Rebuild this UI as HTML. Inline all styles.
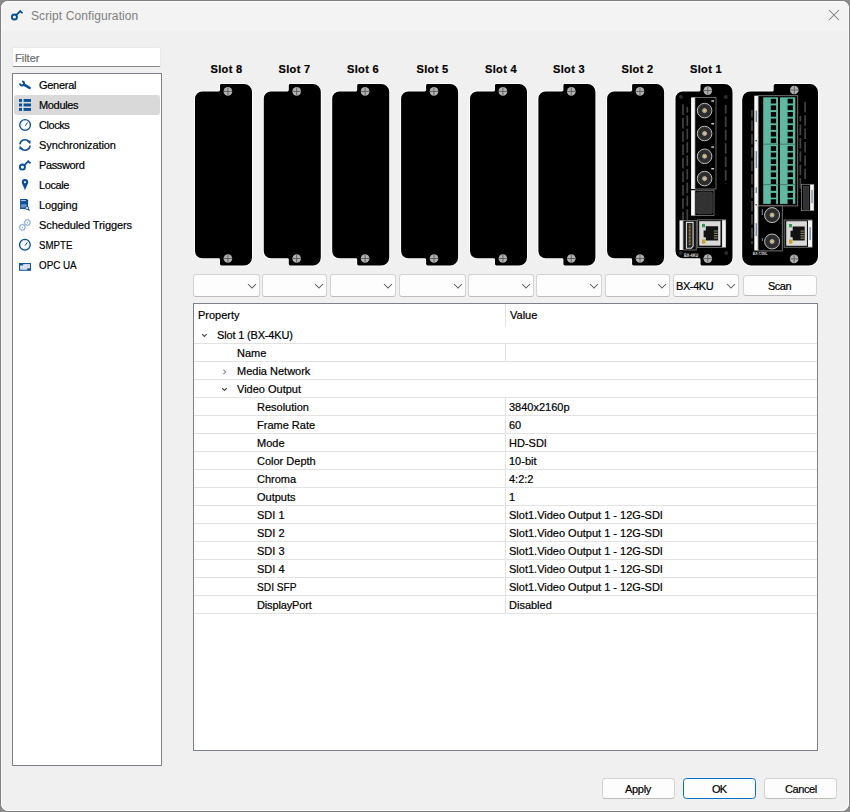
<!DOCTYPE html><html><head><meta charset="utf-8"><style>
html,body{margin:0;padding:0;width:850px;height:812px;overflow:hidden;background:#8a8a8a;}
*{box-sizing:border-box;}
body{font-family:"Liberation Sans",sans-serif;font-size:11px;color:#000;position:relative;}
.a{position:absolute;}
.win{left:0;top:0;width:850px;height:812px;border:1px solid #7f7f7f;border-radius:8px;background:#f0f0f0;overflow:hidden;}
.win .tb{position:absolute;left:0;top:0;right:0;height:30px;background:#f3f3f3;}
.win .hl{position:absolute;left:0;top:0;right:0;bottom:0;border:1px solid #fbfbfb;border-radius:7px;}
.t{position:absolute;white-space:nowrap;line-height:18px;height:18px;-webkit-text-stroke:0.2px currentColor;}
.tr{letter-spacing:-0.1px;}
.title{left:31px;top:7px;font-size:12px;color:#808080;-webkit-text-stroke:0;letter-spacing:0.1px;}
.filter{left:12px;top:47px;width:149px;height:20px;background:#fff;border:1px solid #e9e9e9;border-bottom:1px solid #868686;border-radius:2px;}
.tree{left:12px;top:73px;width:150px;height:693px;background:#fff;border:1px solid #7c8088;}
.sel{left:14px;top:95px;width:146px;height:20px;background:#d9d9d9;border-radius:3px;}
.lbl{font-weight:bold;text-align:center;letter-spacing:0.35px;}
.combo{top:274px;height:23px;background:#fdfdfd;border:1px solid #d3d3d3;border-bottom-color:#bdbdbd;border-radius:3px;}
.btn{position:absolute;background:#fdfdfd;border:1px solid #d3d3d3;border-bottom-color:#bdbdbd;border-radius:3.5px;}
.table{left:193px;top:303px;width:625px;height:448px;background:#fff;border:1px solid #7c8088;}
.hline{position:absolute;height:1px;background:#e3e3e3;}
.vline{position:absolute;width:1px;background:#e3e3e3;}
</style></head><body>
<div class="a win"><div class="tb"></div><div class="hl"></div></div>
<svg class="a" style="left:0;top:0" width="40" height="30" viewBox="0 0 40 30">
<circle cx="14.399999999999999" cy="17.0" r="2.55" fill="none" stroke="#0b4f98" stroke-width="1.9"/>
<path d="M16.2,15.200000000000017 L20.9,10.5 M20.2,11.300000000000011 L22.6,13.099999999999994" stroke="#0b4f98" stroke-width="1.8" fill="none"/>
</svg>
<div class="t title" style="left:31px;top:7px;">Script Configuration</div>
<svg class="a" style="left:828px;top:9px" width="12" height="12" viewBox="0 0 12 12">
<path d="M1 1 L11 11 M11 1 L1 11" stroke="#7a7a7a" stroke-width="1.05"/></svg>
<div class="a filter"></div>
<div class="t " style="left:15px;top:49px;color:#6e6e6e">Filter</div>
<div class="a tree"></div>
<div class="a sel"></div>
<div class="t " style="left:39px;top:76px;letter-spacing:-0.28px">General</div>
<div class="t " style="left:39px;top:96px;letter-spacing:-0.33px">Modules</div>
<div class="t " style="left:39px;top:116px;letter-spacing:-0.46px">Clocks</div>
<div class="t " style="left:39px;top:136px;letter-spacing:-0.1px">Synchronization</div>
<div class="t " style="left:39px;top:156px;letter-spacing:-0.36px">Password</div>
<div class="t " style="left:39px;top:176px;letter-spacing:-0.4px">Locale</div>
<div class="t " style="left:39px;top:196px;letter-spacing:-0.1px">Logging</div>
<div class="t " style="left:39px;top:216px;letter-spacing:-0.1px">Scheduled Triggers</div>
<div class="t " style="left:39px;top:236px;transform:scaleX(0.88);transform-origin:0 0">SMPTE</div>
<div class="t " style="left:39px;top:256px;transform:scaleX(0.893);transform-origin:0 0">OPC UA</div>
<svg class="a" style="left:0;top:0" width="40" height="280" viewBox="0 0 40 280"><path d="M19.95,83.55 A2.05,2.05 0 1 0 22.1,81.35" fill="none" stroke="#0b4f98" stroke-width="1.95"/><path d="M23.9,84.7 L29.6,87.9" stroke="#0b4f98" stroke-width="2.5" stroke-linecap="round"/><g fill="#0b4f98"><rect x="19" y="99" width="3" height="2.9"/><rect x="19" y="103.5" width="3" height="2.9"/><rect x="19" y="108" width="3" height="2.9"/><rect x="23.6" y="99" width="7.4" height="2.9"/><rect x="23.6" y="103.5" width="7.4" height="2.9"/><rect x="23.6" y="108" width="7.4" height="2.9"/></g><circle cx="25.1" cy="125" r="5.35" fill="none" stroke="#0b4f98" stroke-width="1.3"/><path d="M25.3,125.8 L27.5,122.5" stroke="#0b4f98" stroke-width="0.95"/><path d="M25.1,120.4 V121.2 M25.1,128.8 V129.6 M20.5,125 H21.3 M28.900000000000002,125 H29.700000000000003" stroke="#0b4f98" stroke-width="0.7" opacity="0.5"/><path d="M19.9,144.4 A5.15,5.15 0 0 1 28.9,141.6" fill="none" stroke="#0b4f98" stroke-width="1.6"/><path d="M27.0,141.2 L30.8,140.4 L30.2,144.2 Z" fill="#0b4f98"/><path d="M30.1,145.6 A5.15,5.15 0 0 1 21.1,148.4" fill="none" stroke="#0b4f98" stroke-width="1.6"/><path d="M23.0,148.8 L19.2,149.6 L19.8,145.8 Z" fill="#0b4f98"/><circle cx="22.4" cy="167.1" r="2.55" fill="none" stroke="#0b4f98" stroke-width="1.9"/><path d="M24.2,165.3 L28.9,160.6 M28.2,161.4 L30.6,163.2" stroke="#0b4f98" stroke-width="1.8" fill="none"/><path d="M25,179 A3.2,3.2 0 0 1 28.2,182.2 C28.2,184 26.2,186 25,190.6 C23.8,186 21.8,184 21.8,182.2 A3.2,3.2 0 0 1 25,179 Z" fill="#0b4f98"/><rect x="24.1" y="181.3" width="1.8" height="1.8" fill="#fff"/><path d="M20.1,199.1 H27 L28.1,200.2 V208.9 H20.1 Z" fill="#0b4f98"/><rect x="21.1" y="200.1" width="4.7" height="1" fill="#c4d3e6"/><rect x="21.1" y="204.2" width="5.6" height="3.4" fill="#6b93c3"/><circle cx="27" cy="208" r="1.5" fill="#fff" stroke="#0b4f98" stroke-width="0.9"/><path d="M28,209 L29.6,210.6" stroke="#0b4f98" stroke-width="1.1"/><circle cx="22.4" cy="227.4" r="2.75" fill="none" stroke="#6a94c4" stroke-width="0.95"/><circle cx="22.4" cy="227.4" r="3.45" fill="none" stroke="#6a94c4" stroke-width="0.8" stroke-dasharray="1.2 1.5" opacity="0.5"/><circle cx="22.4" cy="227.4" r="0.65" fill="#6a94c4"/><circle cx="27.4" cy="222.5" r="2.75" fill="none" stroke="#6a94c4" stroke-width="0.95"/><circle cx="27.4" cy="222.5" r="3.45" fill="none" stroke="#6a94c4" stroke-width="0.8" stroke-dasharray="1.2 1.5" opacity="0.5"/><circle cx="27.4" cy="222.5" r="0.65" fill="#6a94c4"/><circle cx="24.9" cy="244.8" r="5.35" fill="none" stroke="#0b4f98" stroke-width="1.3"/><path d="M25.099999999999998,245.60000000000002 L27.299999999999997,242.3" stroke="#0b4f98" stroke-width="0.95"/><path d="M24.9,240.20000000000002 V241.0 M24.9,248.60000000000002 V249.4 M20.299999999999997,244.8 H21.099999999999998 M28.7,244.8 H29.5" stroke="#0b4f98" stroke-width="0.7" opacity="0.5"/><rect x="19.6" y="263.6" width="10.8" height="6.6" fill="#f2f6fb" stroke="#0b4f98" stroke-width="1.1"/><path d="M22.5,264 V270 M25,264 V270 M27.5,264 V270 M20,266 H30 M20,268.2 H30" stroke="#b4c8e0" stroke-width="0.55"/><rect x="19.6" y="263.6" width="3.6" height="1.8" fill="#0b4f98"/><rect x="27.2" y="268.4" width="3.2" height="1.8" fill="#0b4f98"/></svg>
<div class="t lbl" style="left:193px;top:60px;width:67px">Slot 8</div>
<div class="a combo" style="left:193px;width:67px"></div>
<svg class="a" style="left:247px;top:283px" width="10" height="6" viewBox="0 0 10 6"><path d="M1 1 L5 5 L9 1" stroke="#5a5a5a" stroke-width="1.05" fill="none"/></svg>
<div class="t lbl" style="left:262px;top:60px;width:65px">Slot 7</div>
<div class="a combo" style="left:262px;width:65px"></div>
<svg class="a" style="left:314px;top:283px" width="10" height="6" viewBox="0 0 10 6"><path d="M1 1 L5 5 L9 1" stroke="#5a5a5a" stroke-width="1.05" fill="none"/></svg>
<div class="t lbl" style="left:330px;top:60px;width:66px">Slot 6</div>
<div class="a combo" style="left:330px;width:66px"></div>
<svg class="a" style="left:383px;top:283px" width="10" height="6" viewBox="0 0 10 6"><path d="M1 1 L5 5 L9 1" stroke="#5a5a5a" stroke-width="1.05" fill="none"/></svg>
<div class="t lbl" style="left:399px;top:60px;width:67px">Slot 5</div>
<div class="a combo" style="left:399px;width:67px"></div>
<svg class="a" style="left:453px;top:283px" width="10" height="6" viewBox="0 0 10 6"><path d="M1 1 L5 5 L9 1" stroke="#5a5a5a" stroke-width="1.05" fill="none"/></svg>
<div class="t lbl" style="left:468px;top:60px;width:66px">Slot 4</div>
<div class="a combo" style="left:468px;width:66px"></div>
<svg class="a" style="left:521px;top:283px" width="10" height="6" viewBox="0 0 10 6"><path d="M1 1 L5 5 L9 1" stroke="#5a5a5a" stroke-width="1.05" fill="none"/></svg>
<div class="t lbl" style="left:536px;top:60px;width:66px">Slot 3</div>
<div class="a combo" style="left:536px;width:66px"></div>
<svg class="a" style="left:589px;top:283px" width="10" height="6" viewBox="0 0 10 6"><path d="M1 1 L5 5 L9 1" stroke="#5a5a5a" stroke-width="1.05" fill="none"/></svg>
<div class="t lbl" style="left:605px;top:60px;width:65px">Slot 2</div>
<div class="a combo" style="left:605px;width:65px"></div>
<svg class="a" style="left:657px;top:283px" width="10" height="6" viewBox="0 0 10 6"><path d="M1 1 L5 5 L9 1" stroke="#5a5a5a" stroke-width="1.05" fill="none"/></svg>
<div class="t lbl" style="left:673px;top:60px;width:66px">Slot 1</div>
<div class="a combo" style="left:673px;width:66px"></div>
<svg class="a" style="left:726px;top:283px" width="10" height="6" viewBox="0 0 10 6"><path d="M1 1 L5 5 L9 1" stroke="#5a5a5a" stroke-width="1.05" fill="none"/></svg>
<div class="t " style="left:676px;top:277px;letter-spacing:-0.4px">BX-4KU</div>
<div class="btn" style="left:743px;top:275px;width:74px;height:21px"></div>
<div class="t " style="left:768px;top:277px;letter-spacing:-0.5px">Scan</div>
<svg class="a" style="left:0;top:0" width="850" height="280" viewBox="0 0 850 280"><g transform="translate(195,84)"><path d="M0,14.6 A7.2,7.2 0 0 1 7.2,7.4 H23.6 Q25,7.4 25,6 V1.4 Q25,0 26.4,0 H49 A8,8 0 0 1 57,8 V173.5 A8,8 0 0 1 49,181.5 H26.4 Q25,181.5 25,180.1 V175.7 Q25,174.3 23.6,174.3 H7.2 A7.2,7.2 0 0 1 0,167.1 Z" fill="none" stroke="#fcfcfc" stroke-width="2"/><path d="M0,14.6 A7.2,7.2 0 0 1 7.2,7.4 H23.6 Q25,7.4 25,6 V1.4 Q25,0 26.4,0 H49 A8,8 0 0 1 57,8 V173.5 A8,8 0 0 1 49,181.5 H26.4 Q25,181.5 25,180.1 V175.7 Q25,174.3 23.6,174.3 H7.2 A7.2,7.2 0 0 1 0,167.1 Z" fill="#000"/><circle cx="32.9" cy="7.4" r="4.3" fill="#b2b2b2"/><path d="M28.9,7.4 H36.9 M32.9,3.4000000000000004 V11.399999999999999" stroke="#4a4a4a" stroke-width="0.75"/><circle cx="32.9" cy="174.5" r="4.3" fill="#b2b2b2"/><path d="M28.9,174.5 H36.9 M32.9,170.5 V178.5" stroke="#4a4a4a" stroke-width="0.75"/></g><g transform="translate(263.8,84)"><path d="M0,14.6 A7.2,7.2 0 0 1 7.2,7.4 H23.6 Q25,7.4 25,6 V1.4 Q25,0 26.4,0 H49 A8,8 0 0 1 57,8 V173.5 A8,8 0 0 1 49,181.5 H26.4 Q25,181.5 25,180.1 V175.7 Q25,174.3 23.6,174.3 H7.2 A7.2,7.2 0 0 1 0,167.1 Z" fill="none" stroke="#fcfcfc" stroke-width="2"/><path d="M0,14.6 A7.2,7.2 0 0 1 7.2,7.4 H23.6 Q25,7.4 25,6 V1.4 Q25,0 26.4,0 H49 A8,8 0 0 1 57,8 V173.5 A8,8 0 0 1 49,181.5 H26.4 Q25,181.5 25,180.1 V175.7 Q25,174.3 23.6,174.3 H7.2 A7.2,7.2 0 0 1 0,167.1 Z" fill="#000"/><circle cx="32.9" cy="7.4" r="4.3" fill="#b2b2b2"/><path d="M28.9,7.4 H36.9 M32.9,3.4000000000000004 V11.399999999999999" stroke="#4a4a4a" stroke-width="0.75"/><circle cx="32.9" cy="174.5" r="4.3" fill="#b2b2b2"/><path d="M28.9,174.5 H36.9 M32.9,170.5 V178.5" stroke="#4a4a4a" stroke-width="0.75"/></g><g transform="translate(332.2,84)"><path d="M0,14.6 A7.2,7.2 0 0 1 7.2,7.4 H23.6 Q25,7.4 25,6 V1.4 Q25,0 26.4,0 H49 A8,8 0 0 1 57,8 V173.5 A8,8 0 0 1 49,181.5 H26.4 Q25,181.5 25,180.1 V175.7 Q25,174.3 23.6,174.3 H7.2 A7.2,7.2 0 0 1 0,167.1 Z" fill="none" stroke="#fcfcfc" stroke-width="2"/><path d="M0,14.6 A7.2,7.2 0 0 1 7.2,7.4 H23.6 Q25,7.4 25,6 V1.4 Q25,0 26.4,0 H49 A8,8 0 0 1 57,8 V173.5 A8,8 0 0 1 49,181.5 H26.4 Q25,181.5 25,180.1 V175.7 Q25,174.3 23.6,174.3 H7.2 A7.2,7.2 0 0 1 0,167.1 Z" fill="#000"/><circle cx="32.9" cy="7.4" r="4.3" fill="#b2b2b2"/><path d="M28.9,7.4 H36.9 M32.9,3.4000000000000004 V11.399999999999999" stroke="#4a4a4a" stroke-width="0.75"/><circle cx="32.9" cy="174.5" r="4.3" fill="#b2b2b2"/><path d="M28.9,174.5 H36.9 M32.9,170.5 V178.5" stroke="#4a4a4a" stroke-width="0.75"/></g><g transform="translate(401.1,84)"><path d="M0,14.6 A7.2,7.2 0 0 1 7.2,7.4 H23.6 Q25,7.4 25,6 V1.4 Q25,0 26.4,0 H49 A8,8 0 0 1 57,8 V173.5 A8,8 0 0 1 49,181.5 H26.4 Q25,181.5 25,180.1 V175.7 Q25,174.3 23.6,174.3 H7.2 A7.2,7.2 0 0 1 0,167.1 Z" fill="none" stroke="#fcfcfc" stroke-width="2"/><path d="M0,14.6 A7.2,7.2 0 0 1 7.2,7.4 H23.6 Q25,7.4 25,6 V1.4 Q25,0 26.4,0 H49 A8,8 0 0 1 57,8 V173.5 A8,8 0 0 1 49,181.5 H26.4 Q25,181.5 25,180.1 V175.7 Q25,174.3 23.6,174.3 H7.2 A7.2,7.2 0 0 1 0,167.1 Z" fill="#000"/><circle cx="32.9" cy="7.4" r="4.3" fill="#b2b2b2"/><path d="M28.9,7.4 H36.9 M32.9,3.4000000000000004 V11.399999999999999" stroke="#4a4a4a" stroke-width="0.75"/><circle cx="32.9" cy="174.5" r="4.3" fill="#b2b2b2"/><path d="M28.9,174.5 H36.9 M32.9,170.5 V178.5" stroke="#4a4a4a" stroke-width="0.75"/></g><g transform="translate(470,84)"><path d="M0,14.6 A7.2,7.2 0 0 1 7.2,7.4 H23.6 Q25,7.4 25,6 V1.4 Q25,0 26.4,0 H49 A8,8 0 0 1 57,8 V173.5 A8,8 0 0 1 49,181.5 H26.4 Q25,181.5 25,180.1 V175.7 Q25,174.3 23.6,174.3 H7.2 A7.2,7.2 0 0 1 0,167.1 Z" fill="none" stroke="#fcfcfc" stroke-width="2"/><path d="M0,14.6 A7.2,7.2 0 0 1 7.2,7.4 H23.6 Q25,7.4 25,6 V1.4 Q25,0 26.4,0 H49 A8,8 0 0 1 57,8 V173.5 A8,8 0 0 1 49,181.5 H26.4 Q25,181.5 25,180.1 V175.7 Q25,174.3 23.6,174.3 H7.2 A7.2,7.2 0 0 1 0,167.1 Z" fill="#000"/><circle cx="32.9" cy="7.4" r="4.3" fill="#b2b2b2"/><path d="M28.9,7.4 H36.9 M32.9,3.4000000000000004 V11.399999999999999" stroke="#4a4a4a" stroke-width="0.75"/><circle cx="32.9" cy="174.5" r="4.3" fill="#b2b2b2"/><path d="M28.9,174.5 H36.9 M32.9,170.5 V178.5" stroke="#4a4a4a" stroke-width="0.75"/></g><g transform="translate(538.4,84)"><path d="M0,14.6 A7.2,7.2 0 0 1 7.2,7.4 H23.6 Q25,7.4 25,6 V1.4 Q25,0 26.4,0 H49 A8,8 0 0 1 57,8 V173.5 A8,8 0 0 1 49,181.5 H26.4 Q25,181.5 25,180.1 V175.7 Q25,174.3 23.6,174.3 H7.2 A7.2,7.2 0 0 1 0,167.1 Z" fill="none" stroke="#fcfcfc" stroke-width="2"/><path d="M0,14.6 A7.2,7.2 0 0 1 7.2,7.4 H23.6 Q25,7.4 25,6 V1.4 Q25,0 26.4,0 H49 A8,8 0 0 1 57,8 V173.5 A8,8 0 0 1 49,181.5 H26.4 Q25,181.5 25,180.1 V175.7 Q25,174.3 23.6,174.3 H7.2 A7.2,7.2 0 0 1 0,167.1 Z" fill="#000"/><circle cx="32.9" cy="7.4" r="4.3" fill="#b2b2b2"/><path d="M28.9,7.4 H36.9 M32.9,3.4000000000000004 V11.399999999999999" stroke="#4a4a4a" stroke-width="0.75"/><circle cx="32.9" cy="174.5" r="4.3" fill="#b2b2b2"/><path d="M28.9,174.5 H36.9 M32.9,170.5 V178.5" stroke="#4a4a4a" stroke-width="0.75"/></g><g transform="translate(607.1,84)"><path d="M0,14.6 A7.2,7.2 0 0 1 7.2,7.4 H23.6 Q25,7.4 25,6 V1.4 Q25,0 26.4,0 H49 A8,8 0 0 1 57,8 V173.5 A8,8 0 0 1 49,181.5 H26.4 Q25,181.5 25,180.1 V175.7 Q25,174.3 23.6,174.3 H7.2 A7.2,7.2 0 0 1 0,167.1 Z" fill="none" stroke="#fcfcfc" stroke-width="2"/><path d="M0,14.6 A7.2,7.2 0 0 1 7.2,7.4 H23.6 Q25,7.4 25,6 V1.4 Q25,0 26.4,0 H49 A8,8 0 0 1 57,8 V173.5 A8,8 0 0 1 49,181.5 H26.4 Q25,181.5 25,180.1 V175.7 Q25,174.3 23.6,174.3 H7.2 A7.2,7.2 0 0 1 0,167.1 Z" fill="#000"/><circle cx="32.9" cy="7.4" r="4.3" fill="#b2b2b2"/><path d="M28.9,7.4 H36.9 M32.9,3.4000000000000004 V11.399999999999999" stroke="#4a4a4a" stroke-width="0.75"/><circle cx="32.9" cy="174.5" r="4.3" fill="#b2b2b2"/><path d="M28.9,174.5 H36.9 M32.9,170.5 V178.5" stroke="#4a4a4a" stroke-width="0.75"/></g><g transform="translate(675.5,84)"><path d="M0,14.6 A7.2,7.2 0 0 1 7.2,7.4 H23.6 Q25,7.4 25,6 V1.4 Q25,0 26.4,0 H49 A8,8 0 0 1 57,8 V173.5 A8,8 0 0 1 49,181.5 H26.4 Q25,181.5 25,180.1 V175.7 Q25,174.3 23.6,174.3 H7.2 A7.2,7.2 0 0 1 0,167.1 Z" fill="none" stroke="#fcfcfc" stroke-width="2"/><path d="M0,14.6 A7.2,7.2 0 0 1 7.2,7.4 H23.6 Q25,7.4 25,6 V1.4 Q25,0 26.4,0 H49 A8,8 0 0 1 57,8 V173.5 A8,8 0 0 1 49,181.5 H26.4 Q25,181.5 25,180.1 V175.7 Q25,174.3 23.6,174.3 H7.2 A7.2,7.2 0 0 1 0,167.1 Z" fill="#000"/><circle cx="5.5" cy="13" r="1.9" fill="#2c2c2c"/><circle cx="50.3" cy="13" r="1.9" fill="#2c2c2c"/><circle cx="5.3" cy="169" r="1.9" fill="#2c2c2c"/><circle cx="50.7" cy="169" r="1.9" fill="#2c2c2c"/><path d="M7.5,20.5 V158" stroke="#424242" stroke-width="1.7" stroke-dasharray="10.5 2.9000000000000004" stroke-dashoffset="0"/><path d="M11.8,23 V150" stroke="#424242" stroke-width="1.7" stroke-dasharray="10.5 2.9000000000000004" stroke-dashoffset="5"/><path d="M50.2,21 V100" stroke="#424242" stroke-width="1.7" stroke-dasharray="10.5 2.9000000000000004" stroke-dashoffset="2"/><rect x="15.6" y="13.4" width="3.9" height="91.6" fill="#fafafa"/><rect x="19.5" y="13.4" width="21" height="91.6" fill="#000" stroke="#8e8e8e" stroke-width="0.7"/><circle cx="29.1" cy="26.6" r="7.3" fill="#333" stroke="#c2c2c2" stroke-width="0.95"/><circle cx="29.1" cy="26.6" r="5.1" fill="#2e2e2e" stroke="#262626" stroke-width="0.6"/><circle cx="29.1" cy="26.6" r="2.0" fill="#b49a6a" stroke="#c4c4c4" stroke-width="0.8"/><circle cx="29.1" cy="26.6" r="0.9" fill="#f2d49a"/><circle cx="29.1" cy="49.5" r="7.3" fill="#333" stroke="#c2c2c2" stroke-width="0.95"/><circle cx="29.1" cy="49.5" r="5.1" fill="#2e2e2e" stroke="#262626" stroke-width="0.6"/><circle cx="29.1" cy="49.5" r="2.0" fill="#b49a6a" stroke="#c4c4c4" stroke-width="0.8"/><circle cx="29.1" cy="49.5" r="0.9" fill="#f2d49a"/><circle cx="29.1" cy="72.3" r="7.3" fill="#333" stroke="#c2c2c2" stroke-width="0.95"/><circle cx="29.1" cy="72.3" r="5.1" fill="#2e2e2e" stroke="#262626" stroke-width="0.6"/><circle cx="29.1" cy="72.3" r="2.0" fill="#b49a6a" stroke="#c4c4c4" stroke-width="0.8"/><circle cx="29.1" cy="72.3" r="0.9" fill="#f2d49a"/><circle cx="29.1" cy="94.6" r="7.3" fill="#333" stroke="#c2c2c2" stroke-width="0.95"/><circle cx="29.1" cy="94.6" r="5.1" fill="#2e2e2e" stroke="#262626" stroke-width="0.6"/><circle cx="29.1" cy="94.6" r="2.0" fill="#b49a6a" stroke="#c4c4c4" stroke-width="0.8"/><circle cx="29.1" cy="94.6" r="0.9" fill="#f2d49a"/><rect x="35.8" y="16.299999999999997" width="2.8" height="1.3" fill="#e6e6e6"/><rect x="35.8" y="39.1" width="2.8" height="1.3" fill="#e6e6e6"/><rect x="35.8" y="62.4" width="2.8" height="1.3" fill="#e6e6e6"/><rect x="35.8" y="84.10000000000001" width="2.8" height="1.3" fill="#e6e6e6"/><rect x="15.6" y="106.2" width="3.9" height="25.4" fill="#fafafa"/><rect x="19.5" y="106.2" width="19" height="25.4" fill="#000" stroke="#8e8e8e" stroke-width="0.7"/><rect x="20.9" y="107.9" width="15.9" height="21.9" rx="1.4" fill="#323232" stroke="#4a4a4a" stroke-width="0.5"/><rect x="4" y="136.4" width="3.7" height="29.6" fill="#f2f2f2"/><rect x="7.7" y="136.4" width="13.1" height="29.6" fill="#111" stroke="#7a7a7a" stroke-width="0.8"/><path d="M10.9,138.4 H17.6 V162 L15.8,164.2 H10.9 Z" fill="#262626" stroke="#d8d8d8" stroke-width="1.1"/><path d="M14.2,140.5 V161" stroke="#a48a4e" stroke-width="1.8" stroke-dasharray="0.9 0.5"/><rect x="21.8" y="135.8" width="28.400000000000002" height="27.69999999999999" fill="#111" stroke="#7a7a7a" stroke-width="0.8"/><rect x="24.2" y="137.6" width="20.400000000000002" height="23.599999999999994" fill="#dadada" stroke="#efefef" stroke-width="0.6"/><path d="M30.32,142.32 H42.6 V156.48 H30.32 V153.176 H28.12 V146.56799999999998 H30.32 Z" fill="#121212"/><rect x="38.4" y="146.332" width="3.8" height="1.3" fill="#7d7b5a"/><rect x="38.4" y="148.69199999999998" width="3.8" height="1.3" fill="#7d7b5a"/><rect x="38.4" y="151.052" width="3.8" height="1.3" fill="#7d7b5a"/><rect x="38.4" y="153.41199999999998" width="3.8" height="1.3" fill="#7d7b5a"/><rect x="26.5" y="139.9" width="3" height="3.4" fill="#2f9b4c"/><rect x="26.5" y="155.39999999999998" width="3.4" height="4.2" fill="#c9a227"/><rect x="46.6" y="136.20000000000002" width="3.6000000000000014" height="26.899999999999988" fill="#f2f2f2"/><text x="8.6" y="172.6" font-family="Liberation Sans" font-weight="bold" font-size="5.2" fill="#eeeeee" text-rendering="geometricPrecision" textLength="14" lengthAdjust="spacingAndGlyphs">BX-4KU</text><circle cx="32.3" cy="6.6" r="4.3" fill="#b2b2b2"/><path d="M28.299999999999997,6.6 H36.3 M32.3,2.5999999999999996 V10.599999999999998" stroke="#4a4a4a" stroke-width="0.75"/><circle cx="32.3" cy="174.6" r="4.3" fill="#b2b2b2"/><path d="M28.299999999999997,174.6 H36.3 M32.3,170.6 V178.6" stroke="#4a4a4a" stroke-width="0.75"/></g><g transform="translate(742.2,84.1)"><path d="M0,15.4 A8,8 0 0 1 8,7.4 H30 Q31.5,7.4 31.5,5.9 V1.5 Q31.5,0 33,0 H68 A7.8,7.8 0 0 1 75.8,7.8 V172.5 A8.8,8.8 0 0 1 67,181.3 H8.8 A8.8,8.8 0 0 1 0,172.5 Z" fill="none" stroke="#fcfcfc" stroke-width="2"/><path d="M0,15.4 A8,8 0 0 1 8,7.4 H30 Q31.5,7.4 31.5,5.9 V1.5 Q31.5,0 33,0 H68 A7.8,7.8 0 0 1 75.8,7.8 V172.5 A8.8,8.8 0 0 1 67,181.3 H8.8 A8.8,8.8 0 0 1 0,172.5 Z" fill="#000"/><path d="M9.8,26 V160" stroke="#424242" stroke-width="1.7" stroke-dasharray="10.5 2.9000000000000004" stroke-dashoffset="3"/><path d="M58.2,32 V108" stroke="#424242" stroke-width="1.7" stroke-dasharray="10.5 2.9000000000000004" stroke-dashoffset="5"/><path d="M62.9,17.7 V95" stroke="#424242" stroke-width="1.7" stroke-dasharray="10.5 2.9000000000000004" stroke-dashoffset="0"/><rect x="12.1" y="11.6" width="4" height="154.8" fill="#fafafa"/><rect x="16.1" y="11.6" width="39.4" height="110.2" fill="#000" stroke="#7e7e7e" stroke-width="0.9"/><rect x="21" y="13.2" width="14.8" height="106.6" fill="#5db9a2"/><rect x="37.8" y="13.2" width="15.3" height="106.6" fill="#5db9a2"/><path d="M21,60.1 H53.1 M21,100.5 H53.1" stroke="#2a5a4d" stroke-width="0.6"/><rect x="28.6" y="14.7" width="5.3" height="4.7" fill="#000"/><rect x="45.4" y="14.7" width="5.3" height="4.7" fill="#000"/><rect x="28.6" y="21.3" width="5.3" height="4.7" fill="#000"/><rect x="45.4" y="21.3" width="5.3" height="4.7" fill="#000"/><rect x="28.6" y="27.9" width="5.3" height="4.7" fill="#000"/><rect x="45.4" y="27.9" width="5.3" height="4.7" fill="#000"/><rect x="28.6" y="34.5" width="5.3" height="4.7" fill="#000"/><rect x="45.4" y="34.5" width="5.3" height="4.7" fill="#000"/><rect x="28.6" y="41.1" width="5.3" height="4.7" fill="#000"/><rect x="45.4" y="41.1" width="5.3" height="4.7" fill="#000"/><rect x="28.6" y="47.7" width="5.3" height="4.7" fill="#000"/><rect x="45.4" y="47.7" width="5.3" height="4.7" fill="#000"/><rect x="28.6" y="54.3" width="5.3" height="4.7" fill="#000"/><rect x="45.4" y="54.3" width="5.3" height="4.7" fill="#000"/><rect x="28.6" y="62.1" width="5.3" height="4.7" fill="#000"/><rect x="45.4" y="62.1" width="5.3" height="4.7" fill="#000"/><rect x="28.6" y="68.5" width="5.3" height="4.7" fill="#000"/><rect x="45.4" y="68.5" width="5.3" height="4.7" fill="#000"/><rect x="28.6" y="75.2" width="5.3" height="4.7" fill="#000"/><rect x="45.4" y="75.2" width="5.3" height="4.7" fill="#000"/><rect x="28.6" y="81.6" width="5.3" height="4.7" fill="#000"/><rect x="45.4" y="81.6" width="5.3" height="4.7" fill="#000"/><rect x="28.6" y="88.3" width="5.3" height="4.7" fill="#000"/><rect x="45.4" y="88.3" width="5.3" height="4.7" fill="#000"/><rect x="28.6" y="95.2" width="5.3" height="4.7" fill="#000"/><rect x="45.4" y="95.2" width="5.3" height="4.7" fill="#000"/><rect x="28.6" y="102" width="5.3" height="4.7" fill="#000"/><rect x="45.4" y="102" width="5.3" height="4.7" fill="#000"/><rect x="28.6" y="108.8" width="5.3" height="4.7" fill="#000"/><rect x="45.4" y="108.8" width="5.3" height="4.7" fill="#000"/><rect x="28.6" y="115.2" width="5.3" height="4.7" fill="#000"/><rect x="45.4" y="115.2" width="5.3" height="4.7" fill="#000"/><rect x="13.4" y="26.5" width="1.3" height="11.5" fill="#55688a" opacity="0.85"/><rect x="13.4" y="67" width="1.3" height="17" fill="#55688a" opacity="0.85"/><rect x="13.4" y="103" width="1.3" height="6" fill="#55688a" opacity="0.85"/><rect x="13.4" y="139" width="1.3" height="13" fill="#55688a" opacity="0.85"/><rect x="13.3" y="56" width="1.3" height="1.3" fill="#222"/><rect x="13.3" y="120" width="1.3" height="1.3" fill="#222"/><rect x="59.2" y="100.2" width="12.4" height="26.4" fill="#000" stroke="#8e8e8e" stroke-width="0.7"/><rect x="61.1" y="102" width="5.6" height="23.4" fill="#323232" stroke="#555" stroke-width="0.4"/><rect x="67.9" y="100.6" width="3.7" height="25.6" fill="#f2f2f2"/><rect x="69.3" y="106" width="1" height="13" fill="#55688a"/><rect x="15.9" y="121.8" width="24.2" height="45" fill="#000" stroke="#7e7e7e" stroke-width="0.9"/><circle cx="29.9" cy="131" r="7.5" fill="#333" stroke="#c2c2c2" stroke-width="0.95"/><circle cx="29.9" cy="131" r="5.3" fill="#2e2e2e" stroke="#262626" stroke-width="0.6"/><circle cx="29.9" cy="131" r="2.0" fill="#b49a6a" stroke="#c4c4c4" stroke-width="0.8"/><circle cx="29.9" cy="131" r="0.9" fill="#f2d49a"/><circle cx="29.9" cy="157.4" r="7.5" fill="#333" stroke="#c2c2c2" stroke-width="0.95"/><circle cx="29.9" cy="157.4" r="5.3" fill="#2e2e2e" stroke="#262626" stroke-width="0.6"/><circle cx="29.9" cy="157.4" r="2.0" fill="#b49a6a" stroke="#c4c4c4" stroke-width="0.8"/><circle cx="29.9" cy="157.4" r="0.9" fill="#f2d49a"/><rect x="19.6" y="125" width="1" height="6" fill="#6f8fb6"/><rect x="19.6" y="154" width="1" height="3" fill="#6f8fb6"/><rect x="42" y="135.9" width="27.900000000000006" height="27.299999999999983" fill="#111" stroke="#7a7a7a" stroke-width="0.8"/><rect x="44.5" y="137.6" width="20.0" height="23.599999999999994" fill="#dadada" stroke="#efefef" stroke-width="0.6"/><path d="M50.5,142.32 H62.5 V156.48 H50.5 V153.176 H48.3 V146.56799999999998 H50.5 Z" fill="#121212"/><rect x="58.3" y="146.332" width="3.8" height="1.3" fill="#7d7b5a"/><rect x="58.3" y="148.69199999999998" width="3.8" height="1.3" fill="#7d7b5a"/><rect x="58.3" y="151.052" width="3.8" height="1.3" fill="#7d7b5a"/><rect x="58.3" y="153.41199999999998" width="3.8" height="1.3" fill="#7d7b5a"/><rect x="46.8" y="139.9" width="3" height="3.4" fill="#2f9b4c"/><rect x="46.8" y="155.39999999999998" width="3.4" height="4.2" fill="#c9a227"/><rect x="65.8" y="136.3" width="4.1000000000000085" height="26.499999999999982" fill="#f2f2f2"/><rect x="67.4" y="143" width="1" height="13" fill="#3f5f8c"/><text x="10.6" y="171" font-family="Liberation Sans" font-weight="bold" font-size="4.8" fill="#d0d4de" text-rendering="geometricPrecision" textLength="14.8" lengthAdjust="spacingAndGlyphs">BX-C0NL</text><circle cx="52.1" cy="5.9" r="4.3" fill="#b2b2b2"/><path d="M48.1,5.9 H56.1 M52.1,1.9000000000000006 V9.899999999999999" stroke="#4a4a4a" stroke-width="0.75"/><circle cx="51.9" cy="174.8" r="4.3" fill="#b2b2b2"/><path d="M47.9,174.8 H55.9 M51.9,170.8 V178.8" stroke="#4a4a4a" stroke-width="0.75"/></g></svg>
<div class="a table"></div>
<div class="t " style="left:198px;top:306px;">Property</div>
<div class="t " style="left:510px;top:306px;">Value</div>
<div class="vline" style="left:505px;top:304px;height:22px"></div>
<div class="hline" style="left:194px;top:343px;width:623px"></div>
<div class="t " style="left:217px;top:326px;letter-spacing:-0.17px">Slot 1 (BX-4KU)</div>
<svg class="a" style="left:0;top:0" width="240" height="345" viewBox="0 0 240 345"><path d="M202.10000000000002,334.1 L204.4,336.5 L206.70000000000002,334.1" stroke="#444" stroke-width="1.15" fill="none"/></svg>
<div class="hline" style="left:194px;top:361px;width:623px"></div>
<div class="t " style="left:237px;top:344px;">Name</div>
<div class="vline" style="left:505px;top:343px;height:18px"></div>
<div class="hline" style="left:194px;top:379px;width:623px"></div>
<div class="t " style="left:237px;top:362px;">Media Network</div>
<svg class="a" style="left:0;top:0" width="240" height="381" viewBox="0 0 240 381"><path d="M223.4,369.6 L225.60000000000002,371.8 L223.4,374" stroke="#8a8a8a" stroke-width="1.1" fill="none"/></svg>
<div class="hline" style="left:194px;top:397px;width:623px"></div>
<div class="t " style="left:237px;top:380px;">Video Output</div>
<svg class="a" style="left:0;top:0" width="240" height="399" viewBox="0 0 240 399"><path d="M222.20000000000002,388.1 L224.5,390.5 L226.8,388.1" stroke="#444" stroke-width="1.15" fill="none"/></svg>
<div class="hline" style="left:194px;top:415px;width:623px"></div>
<div class="t " style="left:257px;top:398px;">Resolution</div>
<div class="vline" style="left:505px;top:397px;height:18px"></div>
<div class="t " style="left:509px;top:398px;">3840x2160p</div>
<div class="hline" style="left:194px;top:433px;width:623px"></div>
<div class="t " style="left:257px;top:416px;">Frame Rate</div>
<div class="vline" style="left:505px;top:415px;height:18px"></div>
<div class="t " style="left:509px;top:416px;">60</div>
<div class="hline" style="left:194px;top:451px;width:623px"></div>
<div class="t " style="left:257px;top:434px;">Mode</div>
<div class="vline" style="left:505px;top:433px;height:18px"></div>
<div class="t " style="left:509px;top:434px;">HD-SDI</div>
<div class="hline" style="left:194px;top:469px;width:623px"></div>
<div class="t " style="left:257px;top:452px;">Color Depth</div>
<div class="vline" style="left:505px;top:451px;height:18px"></div>
<div class="t " style="left:509px;top:452px;">10-bit</div>
<div class="hline" style="left:194px;top:487px;width:623px"></div>
<div class="t " style="left:257px;top:470px;">Chroma</div>
<div class="vline" style="left:505px;top:469px;height:18px"></div>
<div class="t " style="left:509px;top:470px;">4:2:2</div>
<div class="hline" style="left:194px;top:505px;width:623px"></div>
<div class="t " style="left:257px;top:488px;">Outputs</div>
<div class="vline" style="left:505px;top:487px;height:18px"></div>
<div class="t " style="left:509px;top:488px;">1</div>
<div class="hline" style="left:194px;top:523px;width:623px"></div>
<div class="t " style="left:257px;top:506px;">SDI 1</div>
<div class="vline" style="left:505px;top:505px;height:18px"></div>
<div class="t " style="left:509px;top:506px;">Slot1.Video Output 1 - 12G-SDI</div>
<div class="hline" style="left:194px;top:541px;width:623px"></div>
<div class="t " style="left:257px;top:524px;">SDI 2</div>
<div class="vline" style="left:505px;top:523px;height:18px"></div>
<div class="t " style="left:509px;top:524px;">Slot1.Video Output 1 - 12G-SDI</div>
<div class="hline" style="left:194px;top:559px;width:623px"></div>
<div class="t " style="left:257px;top:542px;">SDI 3</div>
<div class="vline" style="left:505px;top:541px;height:18px"></div>
<div class="t " style="left:509px;top:542px;">Slot1.Video Output 1 - 12G-SDI</div>
<div class="hline" style="left:194px;top:577px;width:623px"></div>
<div class="t " style="left:257px;top:560px;">SDI 4</div>
<div class="vline" style="left:505px;top:559px;height:18px"></div>
<div class="t " style="left:509px;top:560px;">Slot1.Video Output 1 - 12G-SDI</div>
<div class="hline" style="left:194px;top:595px;width:623px"></div>
<div class="t " style="left:257px;top:578px;transform:scaleX(0.925);transform-origin:0 0">SDI SFP</div>
<div class="vline" style="left:505px;top:577px;height:18px"></div>
<div class="t " style="left:509px;top:578px;">Slot1.Video Output 1 - 12G-SDI</div>
<div class="hline" style="left:194px;top:613px;width:623px"></div>
<div class="t " style="left:257px;top:596px;letter-spacing:-0.15px">DisplayPort</div>
<div class="vline" style="left:505px;top:595px;height:18px"></div>
<div class="t " style="left:509px;top:596px;">Disabled</div>
<div class="btn" style="left:602px;top:778px;width:73px;height:21px"></div>
<div class="btn" style="left:683px;top:778px;width:73px;height:21px;border:1px solid #0870cc"></div>
<div class="btn" style="left:764px;top:778px;width:73px;height:21px"></div>
<div class="t " style="left:625px;top:780px;letter-spacing:-0.3px">Apply</div>
<div class="t " style="left:712px;top:780px;letter-spacing:-0.8px">OK</div>
<div class="t " style="left:785px;top:780px;letter-spacing:-0.4px">Cancel</div>
</body></html>
